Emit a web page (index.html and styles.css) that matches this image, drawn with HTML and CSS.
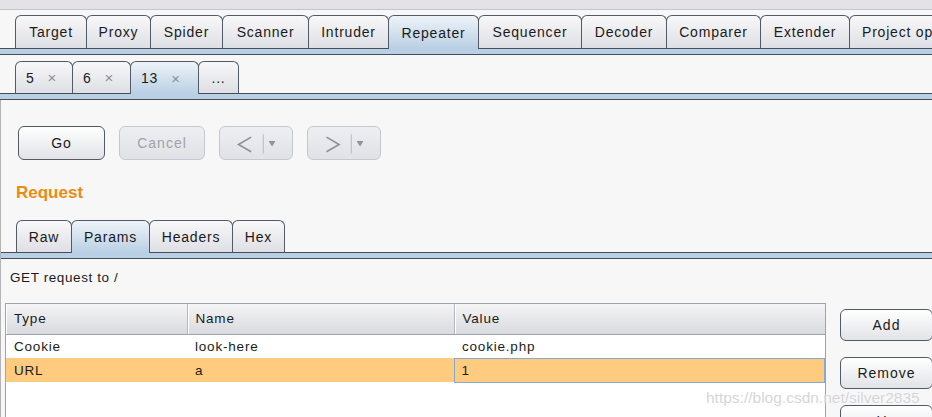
FILE: index.html
```html
<!DOCTYPE html>
<html lang="en">
<head>
<meta charset="utf-8">
<title>Burp Suite Repeater</title>
<link rel="stylesheet" href="styles.css">
</head>
<body>
<div class="topbar"></div>

<div class="tabrow main-tabs">
  <div class="tab">Target</div>
  <div class="tab">Proxy</div>
  <div class="tab">Spider</div>
  <div class="tab">Scanner</div>
  <div class="tab">Intruder</div>
  <div class="tab selected">Repeater</div>
  <div class="tab">Sequencer</div>
  <div class="tab">Decoder</div>
  <div class="tab">Comparer</div>
  <div class="tab">Extender</div>
  <div class="tab">Project options</div>
</div>
<div class="strip"></div>

<div class="tabrow session-tabs">
  <div class="tab"><span>5</span><span class="close">×</span></div>
  <div class="tab"><span>6</span><span class="close">×</span></div>
  <div class="tab selected"><span>13</span><span class="close">×</span></div>
  <div class="tab">...</div>
</div>
<div class="strip"></div>

<div class="panel">
  <div class="toolbar">
    <button class="btn go">Go</button>
    <button class="btn disabled cancel">Cancel</button>
    <button class="btn disabled nav">
      <svg width="74" height="34" viewBox="0 0 74 34">
        <polyline points="32,11 19,18.5 32,26" fill="none" stroke="#8c9098" stroke-width="1.6"/>
        <line x1="44.5" y1="8" x2="44.5" y2="28" stroke="#b6bac2" stroke-width="1"/>
        <polygon points="50,15 57,15 53.5,20.5" fill="#8c9098"/>
      </svg>
    </button>
    <button class="btn disabled nav">
      <svg width="74" height="34" viewBox="0 0 74 34">
        <polyline points="19,11 32,18.5 19,26" fill="none" stroke="#8c9098" stroke-width="1.6"/>
        <line x1="44.5" y1="8" x2="44.5" y2="28" stroke="#b6bac2" stroke-width="1"/>
        <polygon points="50,15 57,15 53.5,20.5" fill="#8c9098"/>
      </svg>
    </button>
  </div>

  <h2 class="section-title">Request</h2>

  <div class="tabrow sub-tabs">
    <div class="tab">Raw</div>
    <div class="tab selected">Params</div>
    <div class="tab">Headers</div>
    <div class="tab">Hex</div>
  </div>
  <div class="strip"></div>

  <div class="req-line">GET request to /</div>

  <div class="params">
    <div class="table-wrap">
      <table class="param-table">
        <colgroup>
          <col class="c-type"><col class="c-name"><col class="c-value">
        </colgroup>
        <thead>
          <tr><th>Type</th><th>Name</th><th>Value</th></tr>
        </thead>
        <tbody>
          <tr><td>Cookie</td><td>look-here</td><td>cookie.php</td></tr>
          <tr class="sel"><td>URL</td><td>a</td><td class="focus">1</td></tr>
        </tbody>
      </table>
    </div>
    <div class="side-buttons">
      <button class="btn side">Add</button>
      <button class="btn side">Remove</button>
      <button class="btn side">Up</button>
    </div>
  </div>

  <div class="watermark">https://blog.csdn.net/silver2835</div>
</div>
</body>
</html>
```

FILE: styles.css
```css
* { box-sizing: border-box; }

html, body {
  margin: 0;
  padding: 0;
}

body {
  width: 932px;
  height: 417px;
  overflow: hidden;
  background: #f7f7f7;
  font-family: "Liberation Sans", Arial, sans-serif;
  font-size: 14px;
  color: #1b1b1b;
}

.topbar {
  height: 10px;
  background: #e3e3e7;
  border-bottom: 1px solid #c4c4c9;
}

/* ---------- tabs ---------- */
.tabrow {
  display: flex;
  align-items: flex-start;
  height: 33px;
  padding-left: 15px;
}

.tab {
  flex: none;
  height: 33px;
  display: flex;
  align-items: center;
  justify-content: center;
  border: 1px solid #525a67;
  border-bottom: none;
  border-radius: 6px 6px 0 0;
  background: linear-gradient(#f8f8fa, #dedfe4);
  letter-spacing: 0.8px;
  white-space: nowrap;
  margin-left: -1px;
  overflow: hidden;
}

.tab:first-child { margin-left: 0; }

.tab.selected {
  position: relative;
  z-index: 1;
  height: 34px;
  background: linear-gradient(#eef3f8, #b9cfe4);
}

.strip {
  height: 7px;
  border-top: 1px solid #464d59;
  border-bottom: 1px solid #464d59;
  background: #b9cfe4;
}

.main-tabs { margin-top: 5px; }
.main-tabs .tab:nth-child(1)  { width: 72px; }
.main-tabs .tab:nth-child(2)  { width: 65px; }
.main-tabs .tab:nth-child(3)  { width: 73px; }
.main-tabs .tab:nth-child(4)  { width: 87px; }
.main-tabs .tab:nth-child(5)  { width: 81px; }
.main-tabs .tab:nth-child(6)  { width: 91px; }
.main-tabs .tab:nth-child(7)  { width: 104px; }
.main-tabs .tab:nth-child(8)  { width: 86px; }
.main-tabs .tab:nth-child(9)  { width: 95px; }
.main-tabs .tab:nth-child(10) { width: 90px; }
.main-tabs .tab:nth-child(11) { width: 130px; justify-content: flex-start; padding-left: 12px; }

.session-tabs {
  margin-top: 6px;
  height: 32px;
}
.session-tabs .tab { height: 32px; gap: 13px; }
.session-tabs .tab.selected { height: 33px; }
.session-tabs .tab:nth-child(1) { width: 58px; justify-content: flex-start; padding-left: 10px; }
.session-tabs .tab:nth-child(2) { width: 59px; justify-content: flex-start; padding-left: 10px; }
.session-tabs .tab:nth-child(3) { width: 69px; justify-content: flex-start; padding-left: 10px; }
.session-tabs .tab:nth-child(4) { width: 41px; }
.close {
  color: #8d9096;
  font-size: 15px;
}

/* ---------- panel ---------- */
.panel {
  position: relative;
  height: 317px;
  padding-top: 26px;
  border-left: 1px solid #b4b4b8;
}

.toolbar {
  display: flex;
  gap: 14px;
  padding-left: 17px;
}

.btn {
  font-family: "Liberation Sans", Arial, sans-serif;
  font-size: 14px;
  letter-spacing: 1px;
  color: #1b1b1b;
  height: 34px;
  padding: 0;
  border: 1px solid #525864;
  border-radius: 6px;
  background: linear-gradient(#ffffff, #e1e3e7);
  display: flex;
  align-items: center;
  justify-content: center;
}

.btn.go { width: 87px; }
.btn.cancel { width: 86px; }
.btn.nav { width: 74px; }

.btn.disabled {
  border-color: #c5c9cf;
  background: linear-gradient(#eceef1, #e0e2e6);
  color: #9fa3aa;
}

.section-title {
  margin: 23px 0 0 15px;
  font-size: 17px;
  line-height: 20px;
  font-weight: bold;
  color: #ea8c12;
}

.sub-tabs {
  margin-top: 17px;
  height: 32px;
}
.sub-tabs .tab { height: 32px; }
.sub-tabs .tab.selected { height: 33px; }
.sub-tabs .tab:nth-child(1) { width: 56px; }
.sub-tabs .tab:nth-child(2) { width: 79px; }
.sub-tabs .tab:nth-child(3) { width: 84px; }
.sub-tabs .tab:nth-child(4) { width: 53px; }

.req-line {
  margin-top: 11px;
  padding-left: 9px;
  font-size: 13.5px;
  line-height: 16px;
  letter-spacing: 0.6px;
}

/* ---------- params ---------- */
.params {
  display: flex;
  gap: 14px;
  margin-top: 17px;
  padding-left: 4px;
}

.table-wrap {
  flex: none;
  width: 821px;
  height: 120px;
  background: #ffffff;
  border: 1px solid #9fa3aa;
  border-bottom: none;
}

.param-table {
  width: 100%;
  border-collapse: collapse;
  table-layout: fixed;
  font-size: 13.5px;
  letter-spacing: 0.8px;
}

.c-type  { width: 181px; }
.c-name  { width: 267px; }
.c-value { width: auto; }

.param-table th {
  height: 30px;
  text-align: left;
  font-weight: normal;
  padding: 0 0 0 8px;
  background: linear-gradient(#f4f4f6, #d9dadf);
  border-bottom: 1px solid #9ea2a9;
  border-right: 1px solid #b3b7be;
  box-shadow: inset 1px 0 0 #ffffff;
}
.param-table th:last-child { border-right: none; }

.param-table td {
  height: 24px;
  padding: 0 0 0 8px;
  white-space: nowrap;
}

.param-table tbody tr:first-child td { height: 24px; }

.param-table tr.sel td { background: #fecb7f; }
.param-table td.focus {
  border: 1px solid #86a9cf;
  padding-left: 7px;
}

.side-buttons {
  display: flex;
  flex-direction: column;
  gap: 16px;
  margin-top: 6px;
}

.btn.side {
  width: 93px;
  height: 32px;
  flex: none;
}

.watermark {
  position: absolute;
  left: 705px;
  top: 289px;
  font-family: "Liberation Sans", Arial, sans-serif;
  font-size: 15.5px;
  color: rgba(205, 205, 210, 0.85);
  text-shadow: 0 0 1px rgba(255, 255, 255, 0.9);
  white-space: nowrap;
  pointer-events: none;
}
```
